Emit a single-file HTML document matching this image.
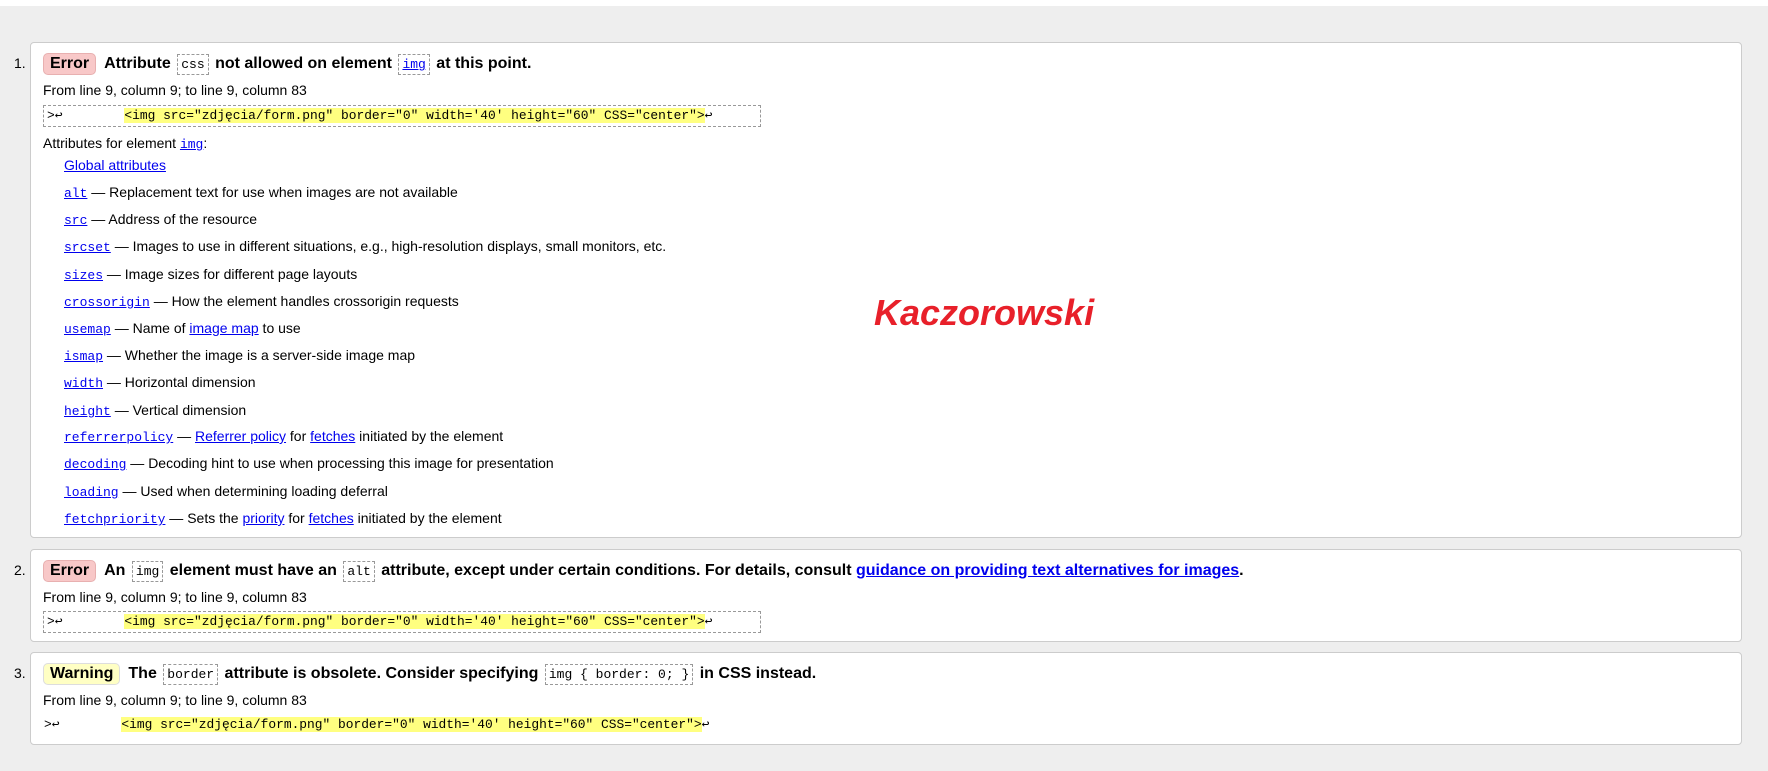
<!DOCTYPE html>
<html><head><meta charset="utf-8"><style>
*{box-sizing:border-box;margin:0;padding:0}
body{width:1768px;height:771px;background:#eeeeee;font-family:"Liberation Sans",Arial,sans-serif;color:#000;position:relative;overflow:hidden}
.top{position:absolute;left:0;top:0;width:1768px;height:6px;background:#fff}
.card{position:absolute;left:30px;width:1712px;background:#fff;border:1px solid #ccc;border-radius:4px}
.num{position:absolute;left:14px;font-size:14px}
.ab{position:absolute;white-space:nowrap}
.title{font-weight:bold;font-size:16px;line-height:20px}
.badge{display:inline-block;padding:1px 6px;border-radius:5px;margin-right:8px;font-size:16px;line-height:18px}
.err{background:#f8c8c8;border:1px solid #e8b0b0}
.warn{background:#ffffc4;border:1px solid #ddd}
code,.mono{font-family:"Liberation Mono","DejaVu Sans Mono",monospace}
.ic{font-weight:normal;font-size:13px;border:1px dashed #999;padding:2px 3px;margin:0 2px}
.ic a{color:#00e}
.t{font-size:14px}
a{color:#00e;text-decoration:underline}
.ml{font-family:"Liberation Mono",monospace;font-size:13px}
.box{position:absolute;left:43px;width:718px;height:22px;border:1px dashed #999;white-space:pre;font-family:"Liberation Mono",monospace;font-size:12.9px;line-height:20px;padding-left:3px}
.hl{background:#ffff80}
.kac{position:absolute;left:874px;top:292px;color:#e8202a;font-weight:bold;font-style:italic;font-size:36px;font-family:"Liberation Sans",sans-serif}
</style></head><body>
<div class="top"></div>

<div class="card" style="top:42px;height:496px"></div>
<div class="num" style="top:55px">1.</div>
<div class="ab title" style="left:43px;top:53px"><span class="badge err">Error</span>Attribute <code class="ic">css</code> not allowed on element <code class="ic"><a>img</a></code> at this point.</div>
<div class="ab t" style="left:43px;top:82px">From line 9, column 9; to line 9, column 83</div>
<div class="box" style="top:105px">&gt;↩        <span class="hl">&lt;img src="zdjęcia/form.png" border="0" width='40' height="60" CSS="center"&gt;</span>↩</div>
<div class="ab t" style="left:43px;top:135px">Attributes for element <a class="ml">img</a>:</div>
<div class="ab t" style="left:64px;top:157px"><a>Global attributes</a></div>
<div class="ab t" style="left:64px;top:184px"><a class="ml">alt</a> — Replacement text for use when images are not available</div>
<div class="ab t" style="left:64px;top:211px"><a class="ml">src</a> — Address of the resource</div>
<div class="ab t" style="left:64px;top:238px"><a class="ml">srcset</a> — Images to use in different situations, e.g., high-resolution displays, small monitors, etc.</div>
<div class="ab t" style="left:64px;top:266px"><a class="ml">sizes</a> — Image sizes for different page layouts</div>
<div class="ab t" style="left:64px;top:293px"><a class="ml">crossorigin</a> — How the element handles crossorigin requests</div>
<div class="ab t" style="left:64px;top:320px"><a class="ml">usemap</a> — Name of <a>image map</a> to use</div>
<div class="ab t" style="left:64px;top:347px"><a class="ml">ismap</a> — Whether the image is a server-side image map</div>
<div class="ab t" style="left:64px;top:374px"><a class="ml">width</a> — Horizontal dimension</div>
<div class="ab t" style="left:64px;top:402px"><a class="ml">height</a> — Vertical dimension</div>
<div class="ab t" style="left:64px;top:428px"><a class="ml">referrerpolicy</a> — <a>Referrer policy</a> for <a>fetches</a> initiated by the element</div>
<div class="ab t" style="left:64px;top:455px"><a class="ml">decoding</a> — Decoding hint to use when processing this image for presentation</div>
<div class="ab t" style="left:64px;top:483px"><a class="ml">loading</a> — Used when determining loading deferral</div>
<div class="ab t" style="left:64px;top:510px"><a class="ml">fetchpriority</a> — Sets the <a>priority</a> for <a>fetches</a> initiated by the element</div>
<div class="kac">Kaczorowski</div>

<div class="card" style="top:549px;height:93px"></div>
<div class="num" style="top:562px">2.</div>
<div class="ab title" style="left:43px;top:560px"><span class="badge err">Error</span>An <code class="ic">img</code> element must have an <code class="ic">alt</code> attribute, except under certain conditions. For details, consult <a>guidance on providing text alternatives for images</a>.</div>
<div class="ab t" style="left:43px;top:589px">From line 9, column 9; to line 9, column 83</div>
<div class="box" style="top:611px">&gt;↩        <span class="hl">&lt;img src="zdjęcia/form.png" border="0" width='40' height="60" CSS="center"&gt;</span>↩</div>

<div class="card" style="top:652px;height:93px"></div>
<div class="num" style="top:665px">3.</div>
<div class="ab title" style="left:43px;top:663px"><span class="badge warn">Warning</span>The <code class="ic">border</code> attribute is obsolete. Consider specifying <code class="ic">img { border: 0; }</code> in CSS instead.</div>
<div class="ab t" style="left:43px;top:692px">From line 9, column 9; to line 9, column 83</div>
<div class="box" style="top:715px;border:none;left:41px">&gt;↩        <span class="hl">&lt;img src="zdjęcia/form.png" border="0" width='40' height="60" CSS="center"&gt;</span>↩</div>
</body></html>
